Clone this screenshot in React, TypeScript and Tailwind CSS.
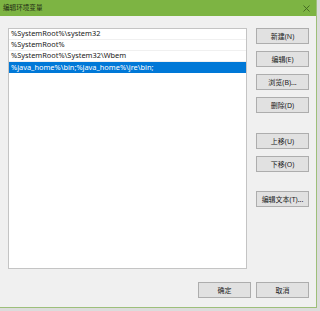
import React from "react";

const rows = [
  "%SystemRoot%\\system32",
  "%SystemRoot%",
  "%SystemRoot%\\System32\\Wbem",
  "%java_home%\\bin;%java_home%\\jre\\bin;",
];

function Btn({ label, className = "" }: { label: string; className?: string }) {
  return (
    <div
      className={`w-[53px] h-[16px] flex items-center justify-center bg-[#e1e1e1] border border-[#adadad] text-[7px] text-[#222] leading-none ${className}`}
    >
      {label}
    </div>
  );
}

export default function App() {
  return (
    <div
      className="w-[320px] h-[311px] bg-[#dcdcdc] overflow-hidden"
      style={{ fontFamily: '"Noto Sans", "Noto Sans CJK SC", sans-serif' }}
    >
      <div className="w-[317px] h-[308px] bg-[#f0f0f0] border-r border-b border-[#9dbf7a] flex flex-col">
        <div className="h-[16px] bg-[#7db443] flex items-center justify-between pl-[3px] pr-[6px] shrink-0">
          <span className="text-[6.6px] text-[#1f2a14] leading-none">编辑环境变量</span>
          <svg width="7" height="7" viewBox="0 0 7 7">
            <path d="M0.5 0.5 L6.5 6.5 M6.5 0.5 L0.5 6.5" stroke="#3f6420" strokeWidth="0.9" />
          </svg>
        </div>
        <div className="flex pt-[12px] pl-[8px]">
          <div className="w-[239px] h-[241px] bg-white border border-[#c4c4c4] flex flex-col pt-0">
            {rows.map((r, i) => {
              const sel = i === 3;
              return (
                <div
                  key={i}
                  className={`h-[11px] flex items-center pl-[2px] text-[7.4px] leading-none whitespace-nowrap ${
                    sel ? "bg-[#0078d7] text-white h-[10px]" : "text-[#1a1a1a] border-b border-[#f0f0f0]"
                  }`}
                >
                  {r}
                </div>
              );
            })}
          </div>
          <div className="ml-[9px] flex flex-col">
            <Btn label="新建(N)" />
            <Btn label="编辑(E)" className="mt-[7px]" />
            <Btn label="浏览(B)..." className="mt-[7px]" />
            <Btn label="删除(D)" className="mt-[7px]" />
            <Btn label="上移(U)" className="mt-[20px]" />
            <Btn label="下移(O)" className="mt-[7px]" />
            <Btn label="编辑文本(T)..." className="mt-[19px]" />
          </div>
        </div>
        <div className="flex justify-end gap-[5px] mt-[13px] pr-[7px]">
          <Btn label="确定" className="border-[#0078d7]" />
          <Btn label="取消" />
        </div>
      </div>
    </div>
  );
}
